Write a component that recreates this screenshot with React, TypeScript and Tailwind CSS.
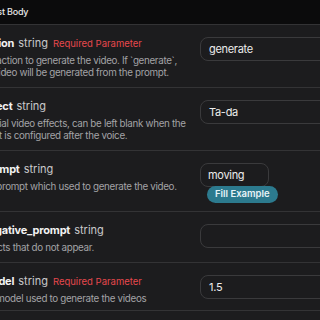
import React from "react";

interface Param {
    name: string;
    required?: boolean;
    lines: string[];
    value: string;
    example?: boolean;
}

const params: Param[] = [
    {
        name: "action",
        required: true,
        lines: ["The action to generate the video. If `generate`,", "the video will be generated from the prompt."],
        value: "generate",
    },
    {
        name: "effect",
        lines: ["Special video effects, can be left blank when the", "effect is configured after the voice."],
        value: "Ta-da",
    },
    {
        name: "prompt",
        lines: ["The prompt which used to generate the video."],
        value: "moving",
        example: true,
    },
    {
        name: "negative_prompt",
        lines: ["Objects that do not appear."],
        value: "",
    },
    {
        name: "model",
        required: true,
        lines: ["The model used to generate the videos"],
        value: "1.5",
    },
];

const ParamRow: React.FC<{ param: Param; last?: boolean }> = ({ param, last }) => {
    return (
        <div className={last ? "flex border-t border-[#333335] pt-[10px] pb-[5px]" : "flex border-t border-[#333335] pt-[10px] pb-2"}>
            {/* Left: name + description */}
            <div className="w-[208px] shrink-0">
                <div className="flex items-baseline gap-[5px] h-4 leading-4 whitespace-nowrap">
                    <span className="text-[11px] font-bold text-[#f2f2f2] tracking-[-0.2px]">{param.name}</span>
                    <span className="text-[11px] text-[#c9c9cb] ml-[-1px]">string</span>
                    {param.required && (
                        <span className="text-[9.5px] text-[#e5484d]">Required Parameter</span>
                    )}
                </div>
                <div className="mt-1 ml-[-5px] text-[9.8px] leading-3 tracking-[-0.32px] text-[#a3a3a6] whitespace-nowrap">
                    {param.lines.map((line) => (
                        <div key={line}>{line}</div>
                    ))}
                </div>
            </div>

            {/* Right: input */}
            <div className="ml-[10px] mt-[2px] w-[160px] shrink-0">
                {param.example ? (
                    <div className="flex flex-col items-start">
                        <div className="w-[69px] h-6 rounded-lg border border-[#3a3a3c] px-[7px] flex items-center text-[11px] tracking-[-0.3px] text-[#ececec]">
                            {param.value}
                        </div>
                        <button className="ml-[7px] -mt-px h-[17px] px-[8px] rounded-full bg-[#2c7a8e] text-[9.5px] font-semibold text-[#e6f3f7]">
                            Fill Example
                        </button>
                    </div>
                ) : (
                    <div className="w-full h-6 rounded-lg border border-[#3a3a3c] px-[8px] flex items-center text-[11px] tracking-[-0.3px] text-[#ececec]">
                        {param.value}
                    </div>
                )}
            </div>
        </div>
    );
};

export default function App() {
    return (
        <div className="w-[320px] h-[320px] overflow-hidden bg-[#1c1c1e]" style={{ fontFamily: "Inter, 'Liberation Sans', sans-serif" }}>
            <div className="ml-[-18px]">
                {/* Header */}
                <div className="h-6 bg-[#0b0b0c] flex items-center text-[9px] font-medium tracking-[-0.2px] text-[#e8e8e8] whitespace-nowrap">
                    <span className="ml-[-11px]">Request Body</span>
                </div>
                {params.map((p, i) => (
                    <ParamRow key={p.name} param={p} last={i === params.length - 1} />
                ))}
                <div className="border-t border-[#333335] h-4" />
            </div>
        </div>
    );
}
